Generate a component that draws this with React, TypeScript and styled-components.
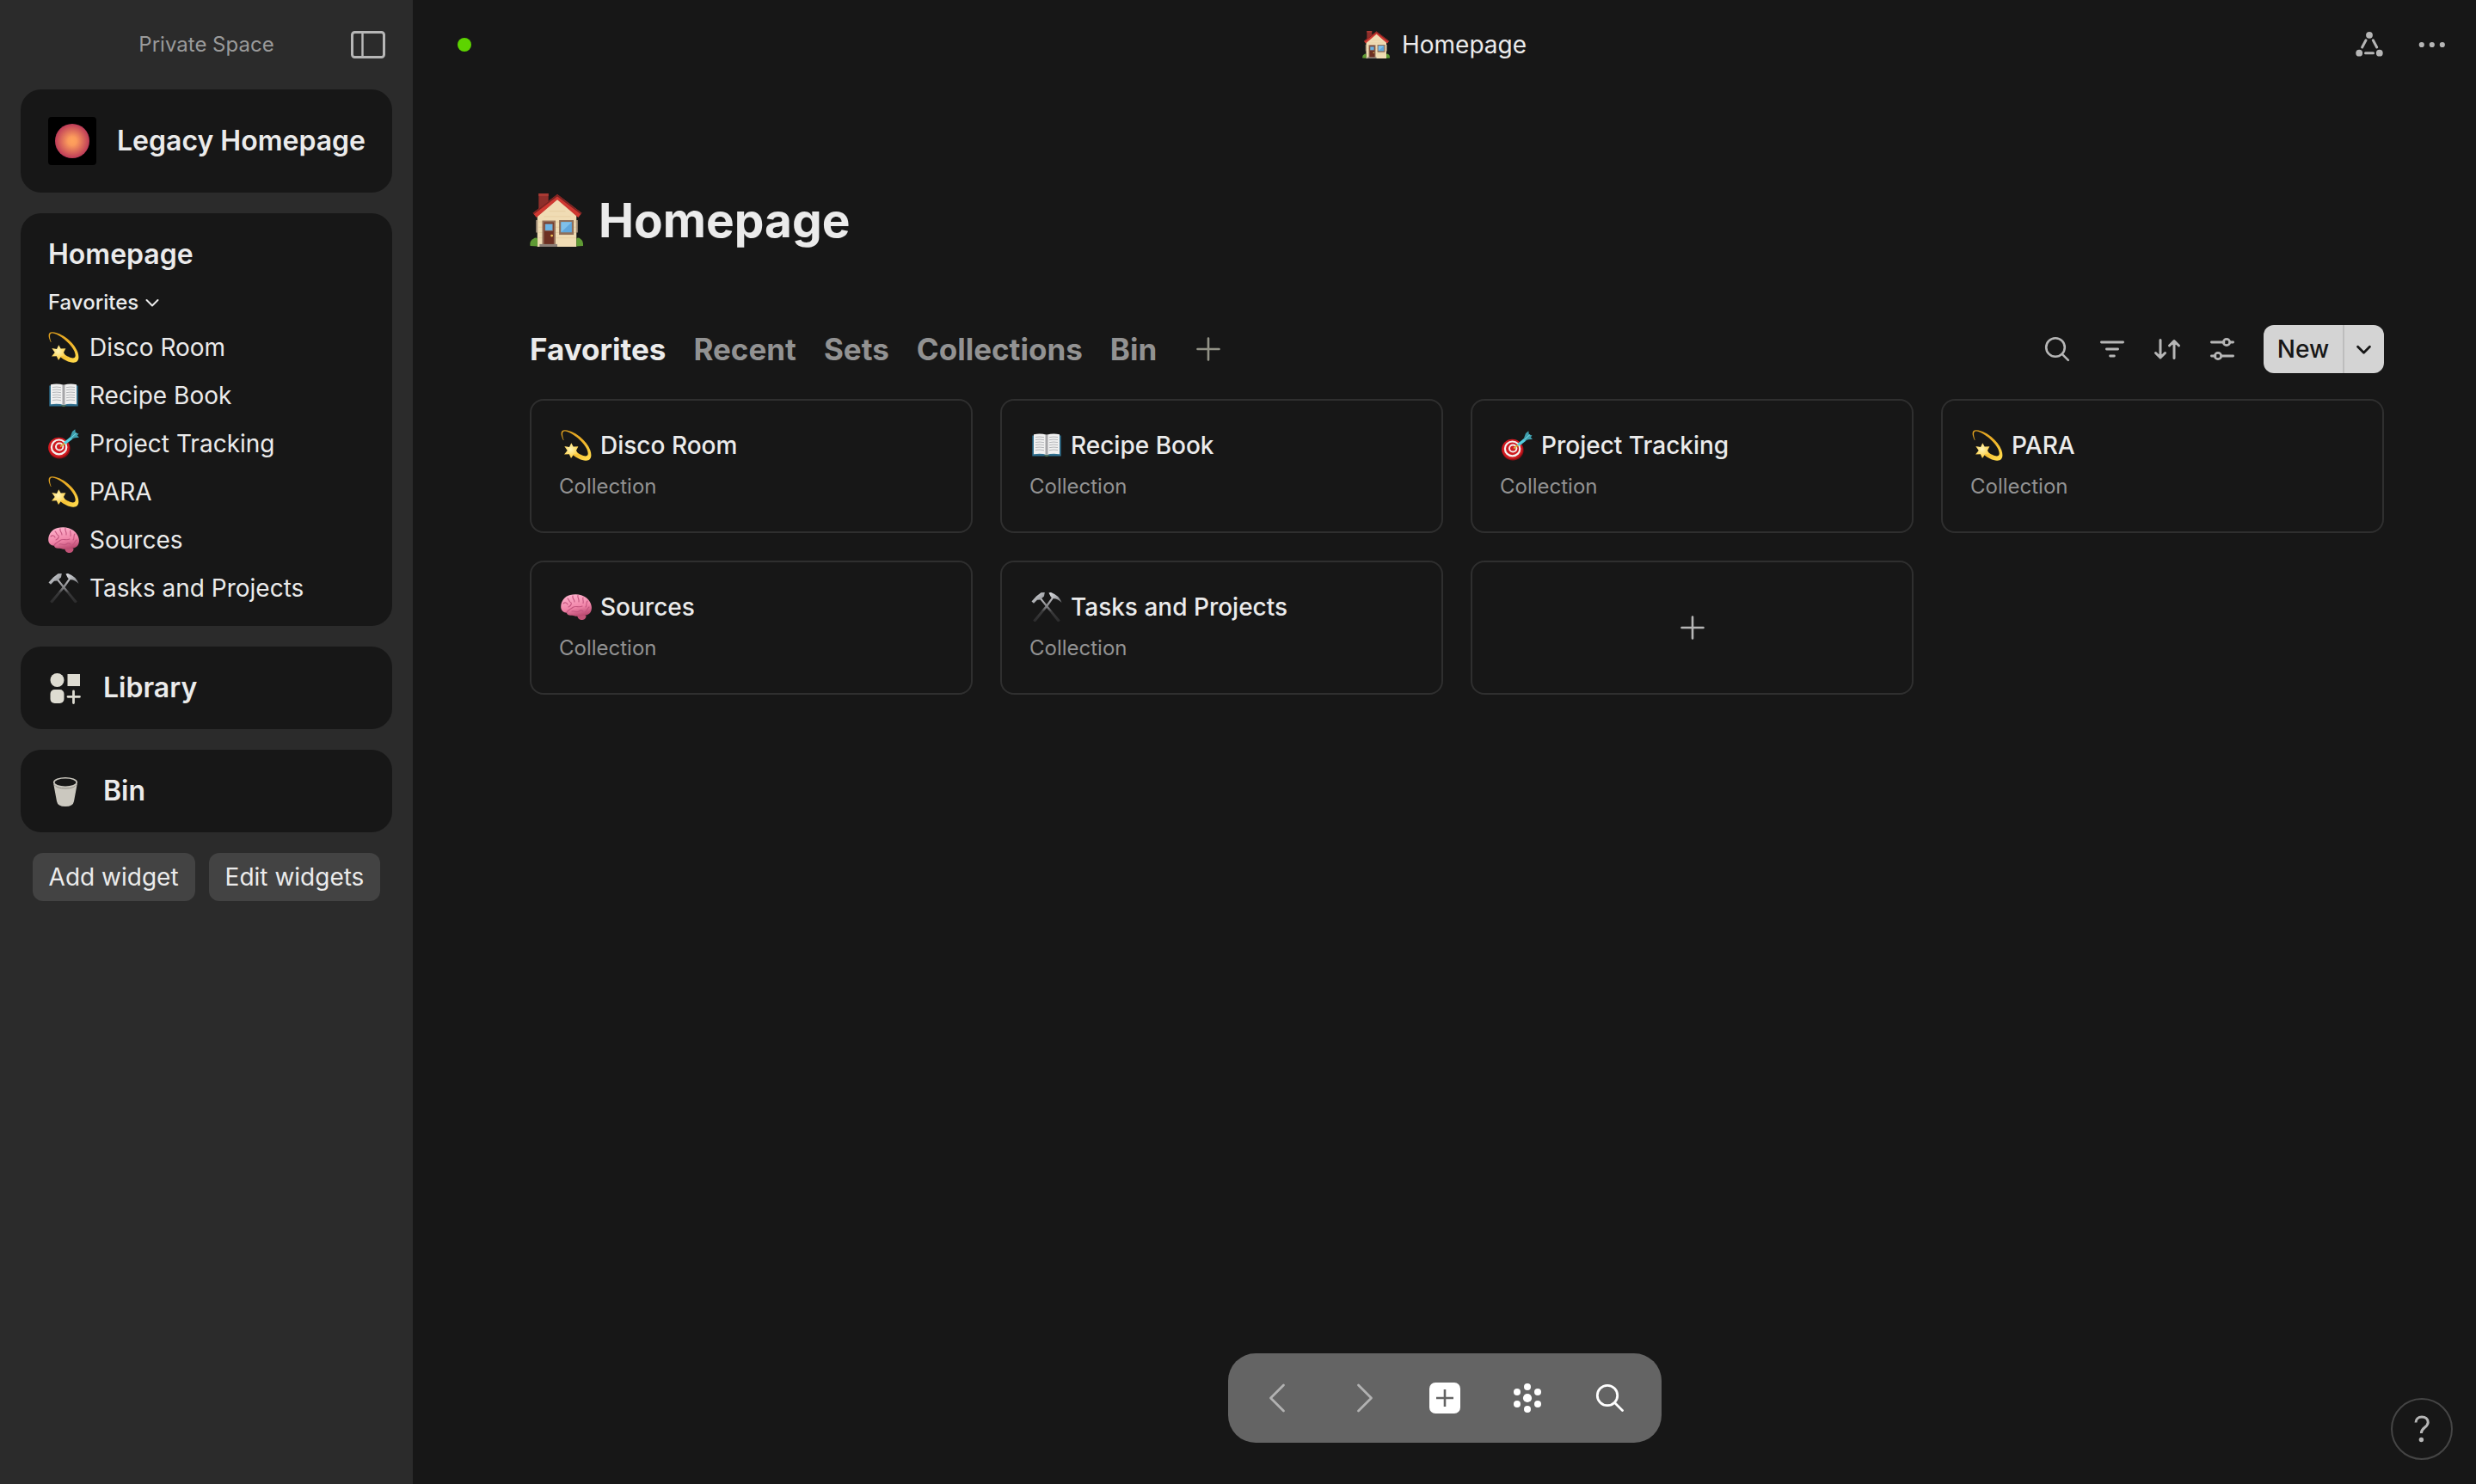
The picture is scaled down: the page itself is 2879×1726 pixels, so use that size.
import React from "react";
import styled, { createGlobalStyle } from "styled-components";

const GlobalStyle = createGlobalStyle`
  *, *::before, *::after { box-sizing: border-box; }
  body {
    margin: 0;
    background: #171717;
    color: #ebebeb;
    font-family: Inter, "Liberation Sans", sans-serif;
    font-size: 28px;
    line-height: 40px;
  }
  button { font: inherit; color: inherit; border: 0; padding: 0; background: none; cursor: pointer; }
  a { color: inherit; text-decoration: none; }
  h1, h2, h3, p, ul { margin: 0; padding: 0; }
  ul { list-style: none; }
  svg { display: block; flex: none; }
`;

const Shell = styled.div`
  display: flex;
  min-height: 100vh;
`;

const Sidebar = styled.aside`
  flex: none;
  width: 480px;
  background: #2b2b2b;
  padding: 0 24px 24px;
`;

const SidebarHeader = styled.header`
  display: grid;
  grid-template-columns: 1fr auto 1fr;
  align-items: center;
  height: 104px;
  padding: 0 8px;
`;

const SpaceName = styled.span`
  grid-column: 2;
  font-size: 24px;
  color: #9a9a9a;
`;

const PanelToggle = styled.button`
  justify-self: end;
  color: #b6b6b6;
`;

const Widgets = styled.div`
  display: flex;
  flex-direction: column;
  gap: 24px;
`;

const LinkWidget = styled.a<{ $tall?: boolean }>`
  display: flex;
  align-items: center;
  gap: 24px;
  height: ${(p) => (p.$tall ? 120 : 96)}px;
  padding: 0 32px;
  border-radius: 24px;
  background: #171717;
  font-size: 32px;
  font-weight: 600;
  white-space: nowrap;
`;

const ListWidget = styled.section`
  padding: 24px 32px 16px;
  border-radius: 24px;
  background: #171717;
`;

const WidgetTitle = styled.h2`
  font-size: 32px;
  line-height: 48px;
  font-weight: 600;
`;

const ViewPicker = styled.button`
  display: flex;
  align-items: center;
  gap: 8px;
  margin: 16px 0 8px;
  font-size: 24px;
  line-height: 32px;
  font-weight: 500;
`;

const ItemLink = styled.a`
  display: flex;
  align-items: center;
  gap: 12px;
  height: 56px;
`;

const WidgetActions = styled.div`
  display: flex;
  justify-content: center;
  gap: 16px;
`;

const WidgetButton = styled.button`
  height: 56px;
  padding: 0 19px;
  border-radius: 12px;
  background: #434343;
`;

const Main = styled.main`
  flex: 1;
  min-width: 0;
`;

const TopBar = styled.header`
  display: grid;
  grid-template-columns: 1fr auto 1fr;
  align-items: center;
  height: 104px;
  padding: 0 36px;
`;

const SyncDot = styled.span`
  width: 16px;
  height: 16px;
  margin-left: 16px;
  border-radius: 50%;
  background: #5dd400;
`;

const Crumb = styled.div`
  display: flex;
  align-items: center;
  gap: 14px;
`;

const TopActions = styled.div`
  display: flex;
  justify-content: flex-end;
  align-items: center;
  gap: 40px;
  color: #b6b6b6;
`;

const Page = styled.div`
  padding: 120px 107px 200px 136px;
`;

const PageTitle = styled.h1`
  display: flex;
  align-items: center;
  gap: 18px;
  font-size: 55px;
  line-height: 64px;
  font-weight: 700;
`;

const Controls = styled.div`
  display: flex;
  align-items: center;
  justify-content: space-between;
  height: 56px;
  margin: 90px 0 30px;
`;

const Tabs = styled.nav`
  display: flex;
  align-items: center;
  gap: 32px;
`;

const Tab = styled.button<{ $active?: boolean }>`
  font-size: 35px;
  font-weight: 700;
  color: ${(p) => (p.$active ? "#ebebeb" : "#929292")};
`;

const AddView = styled.button`
  padding: 0 14px;
  color: #929286;
`;

const Tools = styled.div`
  display: flex;
  align-items: center;
  gap: 32px;
  color: #b6b6b6;
`;

const NewButton = styled.div`
  display: flex;
  height: 56px;
  border-radius: 12px;
  background: #d4d4d4;
  color: #171717;
  overflow: hidden;
`;

const NewMain = styled.button`
  width: 92px;
  font-weight: 500;
`;

const NewMenu = styled.button`
  display: grid;
  place-items: center;
  width: 48px;
  padding-right: 2px;
  border-left: 2px solid #bdbdbd;
`;

const Cards = styled.div`
  display: grid;
  grid-template-columns: repeat(4, 1fr);
  gap: 32px;
`;

const Card = styled.a`
  min-height: 156px;
  padding: 32px;
  border: 2px solid #2f2f2f;
  border-radius: 16px;
`;

const AddCard = styled.button`
  display: grid;
  place-items: center;
  min-height: 156px;
  border: 2px solid #2f2f2f;
  border-radius: 16px;
  color: #b6b6b6;
`;

const CardTitle = styled.h3`
  display: flex;
  align-items: center;
  gap: 10px;
  padding-left: 2px;
  font-size: 28px;
  line-height: 40px;
  font-weight: 500;
`;

const CardType = styled.p`
  margin-top: 12px;
  font-size: 24px;
  line-height: 32px;
  color: #929292;
`;

const NavDock = styled.div`
  position: fixed;
  left: 480px;
  right: 0;
  bottom: 48px;
  display: flex;
  justify-content: center;
  pointer-events: none;
`;

const NavBar = styled.nav`
  display: flex;
  padding: 0 12px;
  height: 104px;
  border-radius: 32px;
  background: #646464;
  pointer-events: auto;
`;

const NavButton = styled.button<{ $dim?: boolean }>`
  display: grid;
  place-items: center;
  width: 96px;
  color: ${(p) => (p.$dim ? "#b2b2b2" : "#ffffff")};
`;

const HelpButton = styled.button`
  position: fixed;
  right: 27px;
  bottom: 28px;
  display: grid;
  place-items: center;
  width: 72px;
  height: 72px;
  border: 2px solid #454545;
  border-radius: 50%;
  color: #b6b6b6;
`;

/* ---------- emoji ---------- */

const Dizzy = () => (
  <svg width="36" height="36" viewBox="0 0 36 36" aria-hidden="true">
    <defs>
      <linearGradient id="swirl" x1="0" y1="0" x2="0.8" y2="1">
        <stop offset="0" stopColor="#d99a1c" />
        <stop offset="0.6" stopColor="#f0b429" />
        <stop offset="1" stopColor="#ffd84a" />
      </linearGradient>
      <radialGradient id="star" cx="0.45" cy="0.4" r="0.6">
        <stop offset="0" stopColor="#fff6b8" />
        <stop offset="1" stopColor="#fccb3c" />
      </radialGradient>
    </defs>
    <path d="M3 12C-.6 5-.4 .1 5 .3C16 1 30 12 34.3 23.500C36.800 31 35 36 29 35.700C24 35.500 18 32.500 14 29L18 25.500C22 28.500 28 31.500 30.500 30C33.200 28 31 22 27 17C20 8 10 1.700 5 1.400C1.200 1.200 1.400 6 3.600 12Z" fill="url(#swirl)" />
    <path d="M12.300 15.200L14.700 19.600L20.400 19.200L18 24L20.800 29L15.300 28.300L12 33L9.800 28.200L4 28.400L7.700 24L4.300 19L10 20Z" fill="url(#star)" />
  </svg>
);

const Book = () => (
  <svg width="36" height="36" viewBox="0 0 36 36" aria-hidden="true">
    <path d="M1.300 6.500H34.700V30.500H20L18 31.200L16 30.500H1.300Z" fill="#2f6f8f" />
    <path d="M3 5.200Q11 3.500 18 5.800Q25 3.500 33 5.200V28.300Q24 27 18 29Q12 27 3 28.300Z" fill="#f0f0f0" />
    <path d="M16.500 5.500L18 6L19.500 5.500V28.500L18 29L16.500 28.500Z" fill="#a5a5a8" />
    <g fill="none" stroke="#aeb0b3" strokeWidth="0.9">
      <path d="M5 8.500Q10 7.500 15 8.700M5 11.500Q10 10.500 15 11.700M5 14.500Q10 13.500 15 14.700M5 17.500Q10 16.500 15 17.700M5 20.500Q10 19.500 15 20.700M5 23.500Q10 22.500 15 23.700" />
      <path d="M21 8.700Q26 7.500 31 8.500M21 11.700Q26 10.500 31 11.500M21 14.700Q26 13.500 31 14.500M21 17.700Q26 16.500 31 17.500M21 20.700Q26 19.500 31 20.500M21 23.700Q26 22.500 31 23.500" />
    </g>
    <path d="M15.500 29.500Q18 31.500 20.500 29.500" fill="none" stroke="#5f7038" strokeWidth="1" />
  </svg>
);

const Target = () => (
  <svg width="36" height="36" viewBox="0 0 36 36" aria-hidden="true">
    <ellipse cx="13" cy="23.500" rx="12.600" ry="11.900" fill="#8f1015" />
    <ellipse cx="12.400" cy="22.300" rx="12.200" ry="11.500" fill="#cf1a20" />
    <ellipse cx="12.600" cy="21.900" rx="8.700" ry="8.400" fill="none" stroke="#f4f0ee" strokeWidth="2.200" />
    <ellipse cx="13.200" cy="21.500" rx="4.200" ry="4.100" fill="#cf1a20" stroke="#f4f0ee" strokeWidth="2" />
    <path d="M14 21.500L19.500 17.500" stroke="#d8b13c" strokeWidth="1.600" />
    <path d="M18 16.500L26 10L28.500 12.500L20.500 18.800Z" fill="#52cfe0" />
    <path d="M25.500 11L28 4L31.300 1.300L31.800 5.200L35.500 6.600L33.800 8.400L36 10.800L31 11.300L27.500 12.500Z" fill="#3f9fae" />
    <path d="M26.500 11.500L33 5.500" stroke="#79dfe9" strokeWidth="1" />
  </svg>
);

const Brain = () => (
  <svg width="36" height="36" viewBox="0 0 36 36" aria-hidden="true">
    <defs>
      <linearGradient id="brain" x1="0.3" y1="0" x2="0.6" y2="1">
        <stop offset="0" stopColor="#ffb3cd" />
        <stop offset="0.600" stopColor="#f084a8" />
        <stop offset="1" stopColor="#b9486f" />
      </linearGradient>
    </defs>
    <path d="M19 27C22 26 29 26.500 29.500 28.500C29.500 32 26 33.500 23.500 33C20.500 32.500 19.500 30 19 27Z" fill="#c25377" />
    <path d="M.3 19C-.5 12.500 4 5.500 11 4C17 2.300 25 3.200 29.500 7C34 10.500 36.600 16 35.800 20.500C35.400 25 32 27.500 27.500 27.800C24 28.300 22.500 29 19 28.800C16 28.700 15 27.500 12.500 27.700C9.500 28 7.500 27 6.800 24.500C3.500 24.500 .8 22.500 .3 19Z" fill="url(#brain)" />
    <g fill="none" stroke="#c4557f" strokeWidth="1.100" strokeLinecap="round">
      <path d="M7 24.500C8 21 12 20.500 14 18.500C17 16 21 19 25 17M3 14C5 12 7 13 8 15M8 8C10 9 9 12 12 13M14 5C13 8 16 9 16 12M20 4.500C19 7 22 9 21 12M26 7C25 9 27 11 26 13.500M31 11C29 13 31 16 29 18M33 18C30 20 31 23 28 24M13 23C16 22 18 25 21 23C23 21.500 25 22 26 23M9 18C11 17 12 16 12.500 14" />
    </g>
  </svg>
);

const Hammers = () => (
  <svg width="36" height="36" viewBox="0 0 36 36" aria-hidden="true">
    <defs>
      <linearGradient id="handle" x1="0" y1="0" x2="0" y2="1">
        <stop offset="0" stopColor="#c9c9cd" />
        <stop offset="0.450" stopColor="#77777a" />
        <stop offset="0.600" stopColor="#3a3a3b" />
        <stop offset="1" stopColor="#2b2b2c" />
      </linearGradient>
      <linearGradient id="head" x1="0" y1="0" x2="1" y2="1">
        <stop offset="0" stopColor="#e4e6ea" />
        <stop offset="1" stopColor="#77797d" />
      </linearGradient>
    </defs>
    <path d="M25 5.500L26.500 7L18.500 18.500L5.500 34.800Q3.500 36 2.300 33.500L16.500 17Z" fill="url(#handle)" />
    <path d="M11 6.500L9.500 8L17 17.500L30.500 34.800Q32.500 36 33.700 33.500L19.500 17Z" fill="url(#handle)" />
    <path d="M.5 11.500L6 5.500L11.500 1.200L15.800 1L15 5.500L10.500 9.500L7 9.800L3 13.800Z" fill="url(#head)" />
    <path d="M20.500 1.500L23 1Q32 4 35.600 13Q31 8.500 26.500 8.300L23 6.500Z" fill="url(#head)" />
  </svg>
);

const House = ({ size }: { size: number }) => (
  <svg width={size} height={size} viewBox="0 0 60 60" aria-hidden="true">
    <path d="M10 0H21V18H10Z" fill="#8e2f2b" />
    <path d="M10 0H21V3H10Z" fill="#a83a33" />
    <path d="M31 5L52.500 25V60H8.500V25Z" fill="#f0dcb4" />
    <path d="M10 32H52M10 38H52M10 44H52M10 50H52M16 26H46M22 20H40" stroke="#e3cb9d" strokeWidth="0.700" />
    <path d="M7 30H9V44H7ZM52 30H54V44H52Z" fill="#a8937c" />
    <path d="M31 1L58.500 22L54.500 27L31 7L7.500 27L3.500 22Z" fill="#cf3831" />
    <path d="M31 1L58.500 22L57.500 23.500L31 3.500L4.500 23.500L3.500 22Z" fill="#7b2422" />
    <path d="M14 30.500H29V58H14Z" fill="#95705a" />
    <path d="M16 32.500H27V57.500H16Z" fill="#6d2f22" />
    <path d="M17 34H26V42H17Z" fill="#6bb3e4" stroke="#8a5a47" strokeWidth="0.800" />
    <circle cx="24.800" cy="47.500" r="1.400" fill="#f0c456" />
    <path d="M33 30H49.500V46.500H33Z" fill="#8f6f5a" />
    <path d="M35.200 32.200H47.300V43.800H35.200Z" fill="#5fa6dc" />
    <path d="M35.200 43.800L47.300 32.200H35.200Z" fill="#7fc0ea" />
    <path d="M11 57H31V60H11Z" fill="#8c8078" />
    <path d="M.5 59Q-.5 53 4 51Q7 48.500 8.800 51V59.500Z" fill="#5f9a34" />
    <path d="M60 59Q60.500 53 57 51Q54 48.500 52.500 51V59.500Z" fill="#5f9a34" />
  </svg>
);

/* ---------- icons ---------- */

const PanelIcon = () => (
  <svg width="40" height="32" viewBox="0 0 40 32" fill="none" stroke="currentColor" strokeWidth="3" aria-hidden="true">
    <rect x="1.500" y="1.500" width="37" height="29" rx="3" />
    <path d="M13.500 2V30" strokeWidth="2.500" />
  </svg>
);

const OrbIcon = () => (
  <svg width="56" height="56" viewBox="0 0 56 56" aria-hidden="true">
    <defs>
      <radialGradient id="orb">
        <stop offset="0" stopColor="#ffa25c" />
        <stop offset="0.250" stopColor="#fb9a5c" />
        <stop offset="1" stopColor="#bd3b58" />
      </radialGradient>
    </defs>
    <rect width="56" height="56" rx="4" fill="#000" />
    <circle cx="28" cy="28" r="20" fill="url(#orb)" />
  </svg>
);

const LibraryIcon = () => (
  <svg width="40" height="40" viewBox="0 0 40 40" fill="#dedcd2" aria-hidden="true">
    <circle cx="10.500" cy="11" r="8" />
    <rect x="22.500" y="4" width="14.500" height="14" />
    <rect x="2.500" y="22" width="16" height="16" rx="5" />
    <path d="M29.500 24V37.500M23 30.300H36.500" stroke="#dedcd2" strokeWidth="2.800" strokeLinecap="round" />
  </svg>
);

const BinIcon = () => (
  <svg width="40" height="40" viewBox="0 0 40 40" aria-hidden="true">
    <path d="M6.300 12L10 32Q11 38 20 38Q29 38 30 32L33.700 12Z" fill="#cbc8bf" />
    <path d="M7 12.500Q10 17 20 17Q30 17 33 12.500" fill="none" stroke="#8b8982" strokeWidth="1" />
    <ellipse cx="20" cy="10" rx="13.300" ry="5.300" fill="#171717" stroke="#cbc8bf" strokeWidth="1.600" />
  </svg>
);

const ChevronDown = ({ size, width }: { size: number; width: number }) => (
  <svg width={size} height={size} viewBox="0 0 16 16" fill="none" stroke="currentColor" strokeWidth={width} strokeLinecap="round" strokeLinejoin="round" aria-hidden="true">
    <path d="M1.500 5L8 11.500L14.500 5" />
  </svg>
);

const PlusIcon = () => (
  <svg width="28" height="28" viewBox="0 0 28 28" fill="none" stroke="currentColor" strokeWidth="2.600" strokeLinecap="round" aria-hidden="true">
    <path d="M14 1.500V26.500M1.500 14H26.500" />
  </svg>
);

const SearchIcon = () => (
  <svg width="32" height="32" viewBox="0 0 32 32" fill="none" stroke="currentColor" strokeWidth="2.600" strokeLinecap="round" aria-hidden="true">
    <circle cx="14" cy="14" r="10.800" />
    <path d="M21.800 21.800L28.800 28.800" />
  </svg>
);

const FilterIcon = () => (
  <svg width="32" height="32" viewBox="0 0 32 32" fill="none" stroke="currentColor" strokeWidth="2.800" strokeLinecap="round" aria-hidden="true">
    <path d="M3.400 8H28.600M9.400 16H22.600M13.600 24H18.400" />
  </svg>
);

const SortIcon = () => (
  <svg width="32" height="32" viewBox="0 0 32 32" fill="none" stroke="currentColor" strokeWidth="3" strokeLinecap="round" strokeLinejoin="round" aria-hidden="true">
    <path d="M8 5.500V26M2.500 20.500L8 26L13.500 20.500M24 26.500V6.500M18.500 12L24 6.500L29.500 12" />
  </svg>
);

const SlidersIcon = () => (
  <svg width="32" height="32" viewBox="0 0 32 32" fill="none" stroke="currentColor" strokeWidth="2.800" strokeLinecap="round" aria-hidden="true">
    <path d="M3.400 8H18M25.500 8H28.600M3.400 24H8M15.500 24H28.600" />
    <circle cx="21" cy="8" r="3.700" />
    <circle cx="11" cy="24" r="3.700" />
  </svg>
);

const GraphIcon = () => (
  <svg width="32" height="32" viewBox="0 0 32 32" aria-hidden="true">
    <g fill="currentColor">
      <circle cx="16" cy="4.800" r="3.900" />
      <circle cx="4.200" cy="25.700" r="3.900" />
      <circle cx="27.800" cy="25.700" r="3.900" />
    </g>
    <path d="M12 10.800L7.600 19M20.300 10.800L24.700 19M11.500 25.700H20.500" stroke="currentColor" strokeWidth="3" strokeLinecap="round" />
  </svg>
);

const MoreIcon = () => (
  <svg width="32" height="32" viewBox="0 0 32 32" fill="currentColor" aria-hidden="true">
    <circle cx="4.800" cy="16" r="3.100" />
    <circle cx="16.800" cy="16" r="3.100" />
    <circle cx="28.800" cy="16" r="3.100" />
  </svg>
);

const ArrowLeft = ({ flip }: { flip?: boolean }) => (
  <svg width="40" height="40" viewBox="0 0 40 40" fill="none" stroke="currentColor" strokeWidth="2.800" strokeLinecap="round" strokeLinejoin="round" aria-hidden="true">
    <path d={flip ? "M15.500 5L30.500 20L15.500 35" : "M24.500 5L9.500 20L24.500 35"} />
  </svg>
);

const AddIcon = () => (
  <svg width="36" height="36" viewBox="0 0 36 36" aria-hidden="true">
    <rect width="36" height="36" rx="7" fill="#fff" />
    <path d="M18 8V28M8 18H28" stroke="#646464" strokeWidth="2.600" />
  </svg>
);

const ClusterIcon = () => (
  <svg width="36" height="36" viewBox="0 0 36 36" fill="currentColor" aria-hidden="true">
    <circle cx="18" cy="18" r="5.100" />
    <circle cx="18" cy="5" r="4" />
    <circle cx="18" cy="31" r="4" />
    <circle cx="6" cy="11" r="4" />
    <circle cx="30" cy="11" r="4" />
    <circle cx="6" cy="25" r="4" />
    <circle cx="30" cy="25" r="4" />
  </svg>
);

const NavSearchIcon = () => (
  <svg width="36" height="36" viewBox="0 0 36 36" fill="none" stroke="currentColor" strokeWidth="2.800" strokeLinecap="round" aria-hidden="true">
    <circle cx="15" cy="15" r="11.700" />
    <path d="M23.500 23.500L32.500 32.500" />
  </svg>
);

const HelpIcon = () => (
  <svg width="32" height="32" viewBox="0 0 32 32" aria-hidden="true">
    <path d="M9 8.500C9 4.500 11.800 2 16 2C20.300 2 23.200 4.500 23.200 8.200C23.200 14 15.400 14.500 15.400 20.500V21" fill="none" stroke="currentColor" strokeWidth="3" />
    <circle cx="15.400" cy="28.500" r="2.700" fill="currentColor" />
  </svg>
);

/* ---------- data ---------- */

const items = [
  { name: "Disco Room", Icon: Dizzy },
  { name: "Recipe Book", Icon: Book },
  { name: "Project Tracking", Icon: Target },
  { name: "PARA", Icon: Dizzy },
  { name: "Sources", Icon: Brain },
  { name: "Tasks and Projects", Icon: Hammers },
];

const tabs = ["Favorites", "Recent", "Sets", "Collections", "Bin"];

export default function App() {
  return (
    <>
      <GlobalStyle />
      <Shell>
        <Sidebar>
          <SidebarHeader>
            <SpaceName>Private Space</SpaceName>
            <PanelToggle aria-label="Toggle sidebar">
              <PanelIcon />
            </PanelToggle>
          </SidebarHeader>
          <Widgets>
            <LinkWidget href="#legacy" $tall>
              <OrbIcon />
              Legacy Homepage
            </LinkWidget>
            <ListWidget>
              <WidgetTitle>Homepage</WidgetTitle>
              <ViewPicker>
                Favorites
                <ChevronDown size={16} width={2} />
              </ViewPicker>
              <ul>
                {items.map(({ name, Icon }) => (
                  <li key={name}>
                    <ItemLink href="#item">
                      <Icon />
                      {name}
                    </ItemLink>
                  </li>
                ))}
              </ul>
            </ListWidget>
            <LinkWidget href="#library">
              <LibraryIcon />
              Library
            </LinkWidget>
            <LinkWidget href="#bin">
              <BinIcon />
              Bin
            </LinkWidget>
            <WidgetActions>
              <WidgetButton>Add widget</WidgetButton>
              <WidgetButton>Edit widgets</WidgetButton>
            </WidgetActions>
          </Widgets>
        </Sidebar>

        <Main>
          <TopBar>
            <SyncDot />
            <Crumb>
              <House size={32} />
              Homepage
            </Crumb>
            <TopActions>
              <button aria-label="Graph">
                <GraphIcon />
              </button>
              <button aria-label="More">
                <MoreIcon />
              </button>
            </TopActions>
          </TopBar>
          <Page>
            <PageTitle>
              <House size={62} />
              Homepage
            </PageTitle>
            <Controls>
              <Tabs>
                {tabs.map((tab, i) => (
                  <Tab key={tab} $active={i === 0}>
                    {tab}
                  </Tab>
                ))}
                <AddView aria-label="Add view">
                  <PlusIcon />
                </AddView>
              </Tabs>
              <Tools>
                <button aria-label="Search">
                  <SearchIcon />
                </button>
                <button aria-label="Filter">
                  <FilterIcon />
                </button>
                <button aria-label="Sort">
                  <SortIcon />
                </button>
                <button aria-label="Settings">
                  <SlidersIcon />
                </button>
                <NewButton>
                  <NewMain>New</NewMain>
                  <NewMenu aria-label="New from template">
                    <ChevronDown size={17} width={2.6} />
                  </NewMenu>
                </NewButton>
              </Tools>
            </Controls>
            <Cards>
              {items.map(({ name, Icon }) => (
                <Card key={name} href="#object">
                  <CardTitle>
                    <Icon />
                    {name}
                  </CardTitle>
                  <CardType>Collection</CardType>
                </Card>
              ))}
              <AddCard aria-label="Add object">
                <PlusIcon />
              </AddCard>
            </Cards>
          </Page>
        </Main>
      </Shell>

      <NavDock>
        <NavBar>
          <NavButton $dim aria-label="Back">
            <ArrowLeft />
          </NavButton>
          <NavButton $dim aria-label="Forward">
            <ArrowLeft flip />
          </NavButton>
          <NavButton aria-label="Create object">
            <AddIcon />
          </NavButton>
          <NavButton aria-label="Spaces">
            <ClusterIcon />
          </NavButton>
          <NavButton aria-label="Search everywhere">
            <NavSearchIcon />
          </NavButton>
        </NavBar>
      </NavDock>
      <HelpButton aria-label="Help">
        <HelpIcon />
      </HelpButton>
    </>
  );
}
